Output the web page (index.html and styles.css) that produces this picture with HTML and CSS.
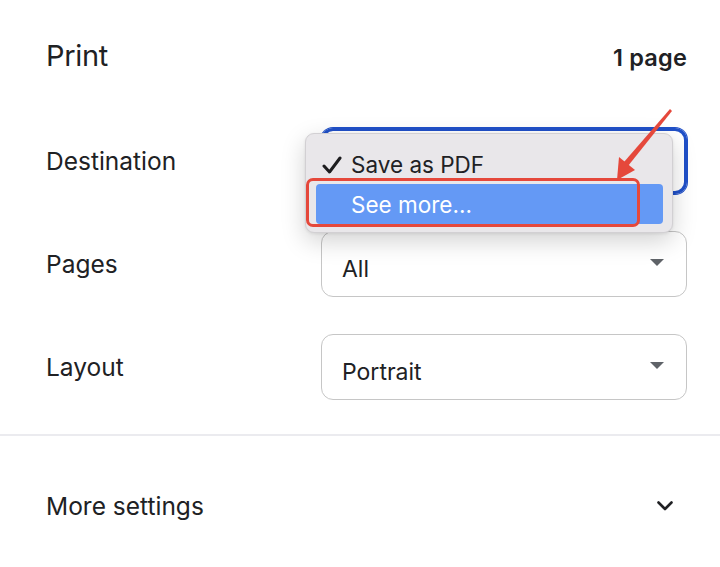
FILE: index.html
```html
<!DOCTYPE html>
<html>
<head>
<meta charset="utf-8">
<link rel="stylesheet" href="styles.css">
</head>
<body>
<div class="page">
  <header class="head">
    <h1 class="title">Print</h1>
    <div class="count">1 page</div>
  </header>
  <section class="settings">
    <div class="row">
      <div class="label">Destination</div>
      <div class="select focused"><span class="value"></span><span class="caret"></span></div>
    </div>
    <div class="row">
      <div class="label">Pages</div>
      <div class="select"><span class="value">All</span><span class="caret"></span></div>
    </div>
    <div class="row">
      <div class="label">Layout</div>
      <div class="select"><span class="value">Portrait</span><span class="caret"></span></div>
    </div>
  </section>
  <div class="divider"></div>
  <div class="more">
    <span class="more-label">More settings</span>
    <svg class="chev" width="18" height="12" viewBox="0 0 18 12"><path d="M2.5 2.5 L9 9 L15.5 2.5" fill="none" stroke="#202124" stroke-width="2.6" stroke-linecap="round" stroke-linejoin="round"/></svg>
  </div>

  <div class="menu">
    <div class="item"><svg class="check" width="20" height="18" viewBox="0 0 20 18"><path d="M2 10 L7.5 16 L18 2" fill="none" stroke="#1d1d1f" stroke-width="3" stroke-linecap="round" stroke-linejoin="round"/></svg>Save as PDF</div>
    <div class="item active">See more...</div>
  </div>
  <div class="mark"></div>
  <svg class="arrow" width="80" height="90" viewBox="0 0 80 90">
    <path d="M22 72 L24 49 L40 62 Z" fill="#e5483b"/>
    <path d="M75 1 L77 3 L33 58 L29 54 Z" fill="#e5483b"/>
  </svg>
</div>
</body>
</html>
```
FILE: styles.css
```css
* { box-sizing: border-box; }
html, body { margin: 0; padding: 0; background: #ffffff; }
body {
  font-family: Inter, "Liberation Sans", sans-serif;
  color: #202124;
  width: 720px;
  height: 567px;
  overflow: hidden;
}
.page { position: relative; height: 567px; }
.head {
  display: flex;
  justify-content: space-between;
  align-items: baseline;
  padding: 38px 33px 0 46px;
  height: 128px;
}
.title {
  margin: 0;
  font-size: 29px;
  font-weight: 400;
  letter-spacing: -0.3px;
}
.count {
  font-size: 23.5px;
  font-weight: 600;
  letter-spacing: 0.2px;
}
.settings {
  display: flex;
  flex-direction: column;
  gap: 37px;
  padding: 0 33px 0 46px;
}
.row {
  display: grid;
  grid-template-columns: 275px 1fr;
  align-items: center;
  height: 66px;
}
.label { font-size: 24.5px; }
.select {
  height: 66px;
  border: 1.5px solid #c6c6c6;
  border-radius: 12px;
  display: flex;
  align-items: center;
  justify-content: space-between;
  padding: 9px 22px 0 20px;
  font-size: 23px;
}
.select.focused {
  border: 3px solid #2050c8;
  box-shadow: 0 0 0 1px #2050c8;
}
.caret {
  width: 0; height: 0;
  border-left: 7px solid transparent;
  border-right: 7px solid transparent;
  border-top: 7px solid #5f6368;
  margin-top: -12px;
}
.divider {
  margin-top: 34px;
  height: 2px;
  background: #ebebef;
}
.more {
  display: flex;
  justify-content: space-between;
  align-items: center;
  padding: 0 46px 0 46px;
  height: 140px;
}
.more-label { font-size: 24.5px; }
.chev { display: block; }

.menu {
  position: absolute;
  left: 305px;
  top: 133px;
  width: 368px;
  height: 100px;
  background: #e9e7ea;
  border: 1px solid #d2d0d3;
  border-radius: 9px;
  box-shadow: 0 8px 24px rgba(0,0,0,0.18), 0 1px 3px rgba(0,0,0,0.08);
  padding: 10px 9px 0 10px;
}
.item {
  height: 40px;
  display: flex;
  align-items: center;
  padding-left: 35px;
  font-size: 22.5px;
  position: relative;
  border-radius: 4px;
}
.item .check {
  position: absolute;
  left: 6px;
  top: 12px;
}
.item.active {
  background: #6499f5;
  color: #ffffff;
}
.mark {
  position: absolute;
  left: 306px;
  top: 178px;
  width: 334px;
  height: 49px;
  border: 3px solid #e5483b;
  border-radius: 7px;
}
.arrow {
  position: absolute;
  left: 595px;
  top: 108px;
}
```
